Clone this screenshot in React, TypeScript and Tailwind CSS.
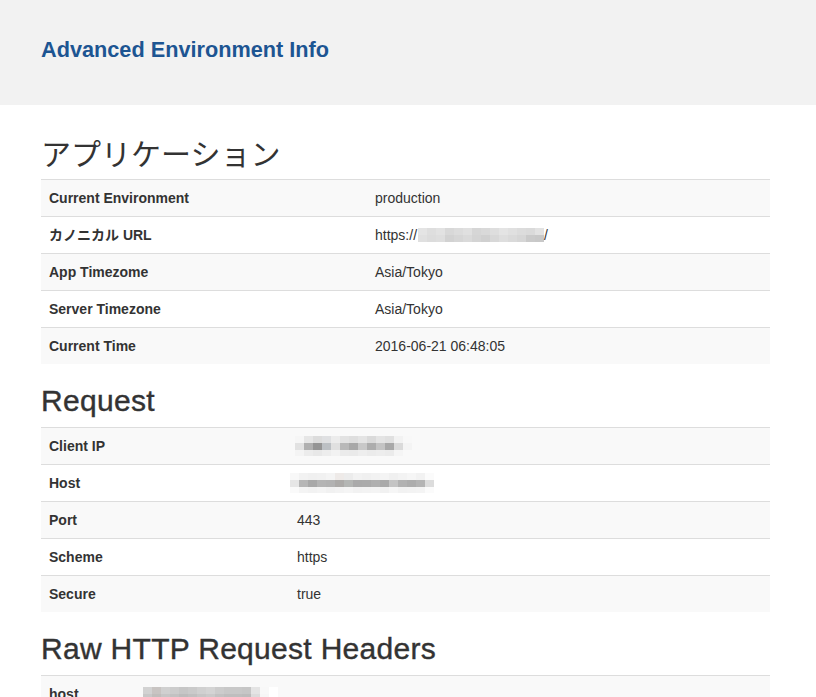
import React from "react";

type Row = { label: string; value: React.ReactNode };

const FONT = "font-['Liberation_Sans','Noto_Sans_CJK_JP',sans-serif]";

// pixelated blur blocks standing in for redacted values
const Mosaic = ({ rows, x = 0 }: { rows: string[][]; x?: number }) => (
  <span
    className="inline-flex h-5 flex-col justify-center overflow-hidden align-top"
    style={{ marginLeft: x }}
  >
    {rows.map((r, i) => (
      <span key={i} className="flex shrink-0">
        {r.map((c, j) => (
          <span key={j} className={`h-[7px] w-[9px] ${c}`} />
        ))}
      </span>
    ))}
  </span>
);

const clientIp = [
  ["bg-[#f6f6f6]", "bg-[#e6e6e6]", "bg-[#dcdcdc]", "bg-[#dfe0e2]", "bg-[#ececec]", "bg-[#e2e2e2]", "bg-[#dedede]", "bg-[#e4e4e4]", "bg-[#dadada]", "bg-[#e4e4e4]", "bg-[#e0e0e0]", "bg-[#f2f2f2]", "bg-[#f8f8f8]"],
  ["bg-[#e2e2e2]", "bg-[#b0b0b0]", "bg-[#959595]", "bg-[#bcc0c4]", "bg-[#e0e0e0]", "bg-[#b8b8b8]", "bg-[#a8a8a8]", "bg-[#c8c8c8]", "bg-[#adadad]", "bg-[#c4c4c4]", "bg-[#a8a8a8]", "bg-[#dadada]", "bg-[#f4f4f4]"],
  ["bg-[#f4f4f4]", "bg-[#ececec]", "bg-[#e8e8e8]", "bg-[#ededed]", "bg-[#f2f2f2]", "bg-[#ebebeb]", "bg-[#eaeaea]", "bg-[#eeeeee]", "bg-[#ebebeb]", "bg-[#ededed]", "bg-[#ebebeb]", "bg-[#f5f5f5]", "bg-[#f9f9f9]"],
];

const host = [
  ["bg-[#f8f8f8]", "bg-[#f2f2f2]", "bg-[#f0f0f0]", "bg-[#f1f1f1]", "bg-[#f4f4f4]", "bg-[#eeeae8]", "bg-[#ececec]", "bg-[#f2f2f2]", "bg-[#f0f0f0]", "bg-[#f2f2f2]", "bg-[#f4f4f4]", "bg-[#f0f0f0]", "bg-[#f3f3f3]", "bg-[#f6f6f6]", "bg-[#f2f2f2]", "bg-[#fbfbfb]"],
  ["bg-[#e6e6e6]", "bg-[#b6b6b6]", "bg-[#a8a8a8]", "bg-[#b4b4b4]", "bg-[#b2b2b2]", "bg-[#acaaa8]", "bg-[#b4b6b4]", "bg-[#aaaaaa]", "bg-[#ababab]", "bg-[#b0b0b0]", "bg-[#a9a9a9]", "bg-[#c4c4c4]", "bg-[#b2b2b2]", "bg-[#adadad]", "bg-[#b4b4b4]", "bg-[#dcdcdc]"],
  ["bg-[#fafafa]", "bg-[#f4f4f4]", "bg-[#f2f2f2]", "bg-[#f4f4f4]", "bg-[#f1f1f1]", "bg-[#f3f3f3]", "bg-[#f5f5f5]", "bg-[#f2f2f2]", "bg-[#f3f3f3]", "bg-[#f4f4f4]", "bg-[#f1f1f1]", "bg-[#f6f6f6]", "bg-[#f2f2f2]", "bg-[#f3f3f3]", "bg-[#f4f4f4]", "bg-[#fbfbfb]"],
];

const url = [
  ["bg-[#e4e4e4]", "bg-[#dedede]", "bg-[#e2e2e2]", "bg-[#d8d8d8]", "bg-[#dcdcdc]", "bg-[#e0e0e0]", "bg-[#d6d6d6]", "bg-[#d9d9d9]", "bg-[#dedede]", "bg-[#e4e4e4]", "bg-[#e0e0e0]", "bg-[#dcdcdc]", "bg-[#dadada]", "bg-[#e2e2e2]"],
  ["bg-[#e0e0e0]", "bg-[#dcdcdc]", "bg-[#dedede]", "bg-[#d2d2d2]", "bg-[#d6d6d6]", "bg-[#dadada]", "bg-[#d4d4d4]", "bg-[#d0d0d0]", "bg-[#d8d8d8]", "bg-[#dedede]", "bg-[#dadada]", "bg-[#d6d6d6]", "bg-[#cacaca]", "bg-[#c8c8c8]"],
];

const rawHost = [
  ["bg-[#d2d2d2]", "bg-[#c8c4c2]", "bg-[#d0d0d0]", "bg-[#cccccc]", "bg-[#c6c6c6]", "bg-[#cacaca]", "bg-[#d0d0d0]", "bg-[#d4d4d4]", "bg-[#cccccc]", "bg-[#c8c8c8]", "bg-[#c8c8c8]", "bg-[#c6c6c6]", "bg-[#e4e4e4]", "bg-[#f8f8f8]", "bg-white"],
  ["bg-[#c8c8c8]", "bg-[#c0bebc]", "bg-[#c6c6c6]", "bg-[#c2c2c2]", "bg-[#bcbcbc]", "bg-[#c0c0c0]", "bg-[#c6c6c6]", "bg-[#cacaca]", "bg-[#c2c2c2]", "bg-[#bebebe]", "bg-[#bebebe]", "bg-[#bcbcbc]", "bg-[#dcdcdc]", "bg-[#f6f6f6]", "bg-white"],
];

const InfoTable = ({ rows, labelWidth }: { rows: Row[]; labelWidth: string }) => (
  <table className="mb-5 w-full border-collapse text-[14px] leading-5 text-[#333]">
    <tbody>
      {rows.map((row, i) => (
        <tr key={row.label} className={i % 2 === 0 ? "bg-[#f9f9f9]" : "bg-white"}>
          <td className={`border-t border-[#ddd] p-2 align-top font-bold ${labelWidth}`}>
            {row.label}
          </td>
          <td className="border-t border-[#ddd] p-2 align-top">{row.value}</td>
        </tr>
      ))}
    </tbody>
  </table>
);

const SectionTitle = ({ children, className = "" }: { children: React.ReactNode; className?: string }) => (
  <h2 className={`mb-[10px] text-[30px] leading-[33px] text-[#333] ${className}`}>
    {children}
  </h2>
);

export default function App() {
  const appRows: Row[] = [
    { label: "Current Environment", value: "production" },
    {
      label: "カノニカル URL",
      value: (
        <span className="inline-flex items-center">
          https://
          <Mosaic rows={url} x={1} />/
        </span>
      ),
    },
    { label: "App Timezome", value: "Asia/Tokyo" },
    { label: "Server Timezone", value: "Asia/Tokyo" },
    { label: "Current Time", value: "2016-06-21 06:48:05" },
  ];

  const requestRows: Row[] = [
    { label: "Client IP", value: <Mosaic rows={clientIp} x={-2} /> },
    { label: "Host", value: <Mosaic rows={host} x={-7} /> },
    { label: "Port", value: "443" },
    { label: "Scheme", value: "https" },
    { label: "Secure", value: "true" },
  ];

  const headerRows: Row[] = [{ label: "host", value: <Mosaic rows={rawHost} /> }];

  return (
    <div className={`min-h-screen bg-white ${FONT}`}>
      <header className="flex h-[105px] items-center bg-[#f2f2f2] pl-[41px]">
        <h1 className="pb-[4px] text-[21.7px] font-bold text-[#1d5592]">Advanced Environment Info</h1>
      </header>
      <main className="ml-[41px] w-[729px] pt-[31px]">
        <SectionTitle className="font-['Noto_Sans_CJK_JP',sans-serif] font-normal">
          アプリケーション
        </SectionTitle>
        <InfoTable rows={appRows} labelWidth="w-[326px]" />
        <SectionTitle className="mt-5 tracking-[0.3px] [-webkit-text-stroke:0.4px_#333]">
          Request
        </SectionTitle>
        <InfoTable rows={requestRows} labelWidth="w-[248px]" />
        <SectionTitle className="mt-5 tracking-[0.3px] [-webkit-text-stroke:0.4px_#333]">
          Raw HTTP Request Headers
        </SectionTitle>
        <InfoTable rows={headerRows} labelWidth="w-[94px]" />
      </main>
    </div>
  );
}
